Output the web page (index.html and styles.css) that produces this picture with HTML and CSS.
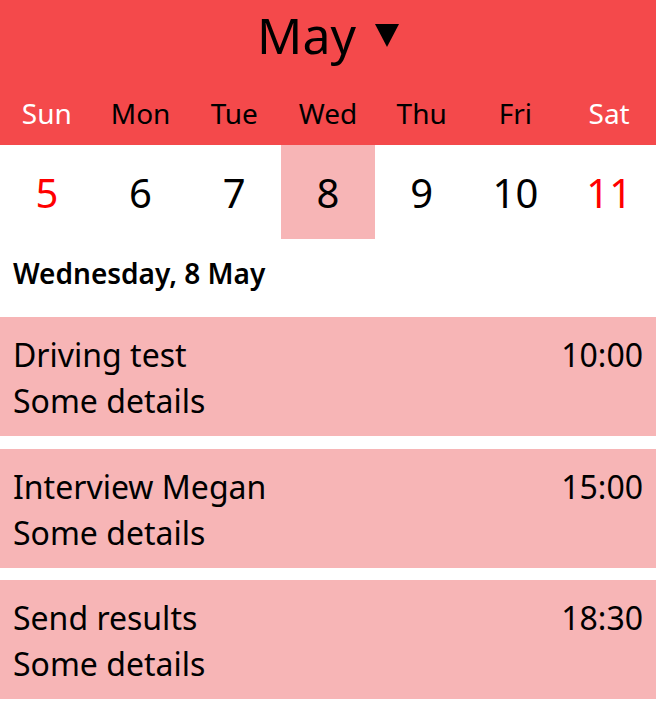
FILE: index.html
```html
<!DOCTYPE html>
<html lang="en">
<head>
<meta charset="utf-8">
<title>Calendar</title>
<link rel="stylesheet" href="styles.css">
</head>
<body>
<header class="cal-header">
  <div class="month-row">
    <span class="month-name">May</span>
    <svg class="month-caret" width="24" height="23" viewBox="0 0 24 23"><polygon points="0,0 24,0 12,23" fill="#000"/></svg>
  </div>
  <div class="weekdays">
    <div class="wd weekend">Sun</div>
    <div class="wd">Mon</div>
    <div class="wd">Tue</div>
    <div class="wd">Wed</div>
    <div class="wd">Thu</div>
    <div class="wd">Fri</div>
    <div class="wd weekend">Sat</div>
  </div>
</header>
<section class="dates">
  <div class="date weekend">5</div>
  <div class="date">6</div>
  <div class="date">7</div>
  <div class="date selected">8</div>
  <div class="date">9</div>
  <div class="date">10</div>
  <div class="date weekend">11</div>
</section>
<h2 class="day-label">Wednesday, 8 May</h2>
<section class="events">
  <div class="event">
    <div class="event-text">
      <div class="event-title">Driving test</div>
      <div class="event-details">Some details</div>
    </div>
    <div class="event-time">10:00</div>
  </div>
  <div class="event">
    <div class="event-text">
      <div class="event-title">Interview Megan</div>
      <div class="event-details">Some details</div>
    </div>
    <div class="event-time">15:00</div>
  </div>
  <div class="event">
    <div class="event-text">
      <div class="event-title">Send results</div>
      <div class="event-details">Some details</div>
    </div>
    <div class="event-time">18:30</div>
  </div>
</section>
</body>
</html>
```

FILE: styles.css
```css
* { box-sizing: border-box; }
html, body { margin: 0; padding: 0; background: #fff; }
body {
  font-family: "Noto Sans", "Open Sans", sans-serif;
  color: #000;
  width: 656px;
}
.cal-header {
  background: #f4494b;
  height: 145px;
  display: flex;
  flex-direction: column;
}
.month-row {
  height: 87px;
  display: flex;
  align-items: flex-start;
  justify-content: center;
  gap: 19px;
  padding-top: 5px;
}
.month-name {
  font-size: 50px;
  line-height: 60px;
}
.month-caret { margin-top: 19px; }
.weekdays {
  display: grid;
  grid-template-columns: repeat(7, 1fr);
  height: 58px;
  align-items: center;
}
.wd {
  text-align: center;
  font-size: 28px;
  line-height: 36px;
  margin-top: -6px;
}
.wd.weekend { color: #fff; }
.dates {
  display: grid;
  grid-template-columns: repeat(7, 1fr);
  height: 94px;
}
.date {
  display: flex;
  align-items: center;
  justify-content: center;
  font-size: 40px;
}
.date.weekend { color: #ff0000; }
.date.selected { background: #f7b5b6; }
.day-label {
  margin: 0;
  height: 78px;
  padding: 14px 13px 0;
  font-size: 28px;
  font-weight: 600;
  line-height: 40px;
}
.events {
  display: flex;
  flex-direction: column;
  gap: 12.5px;
}
.event {
  background: #f7b5b6;
  height: 119px;
  padding: 15px 13px 0;
  display: flex;
  justify-content: space-between;
  align-items: flex-start;
  font-size: 32px;
  line-height: 46px;
}
```
